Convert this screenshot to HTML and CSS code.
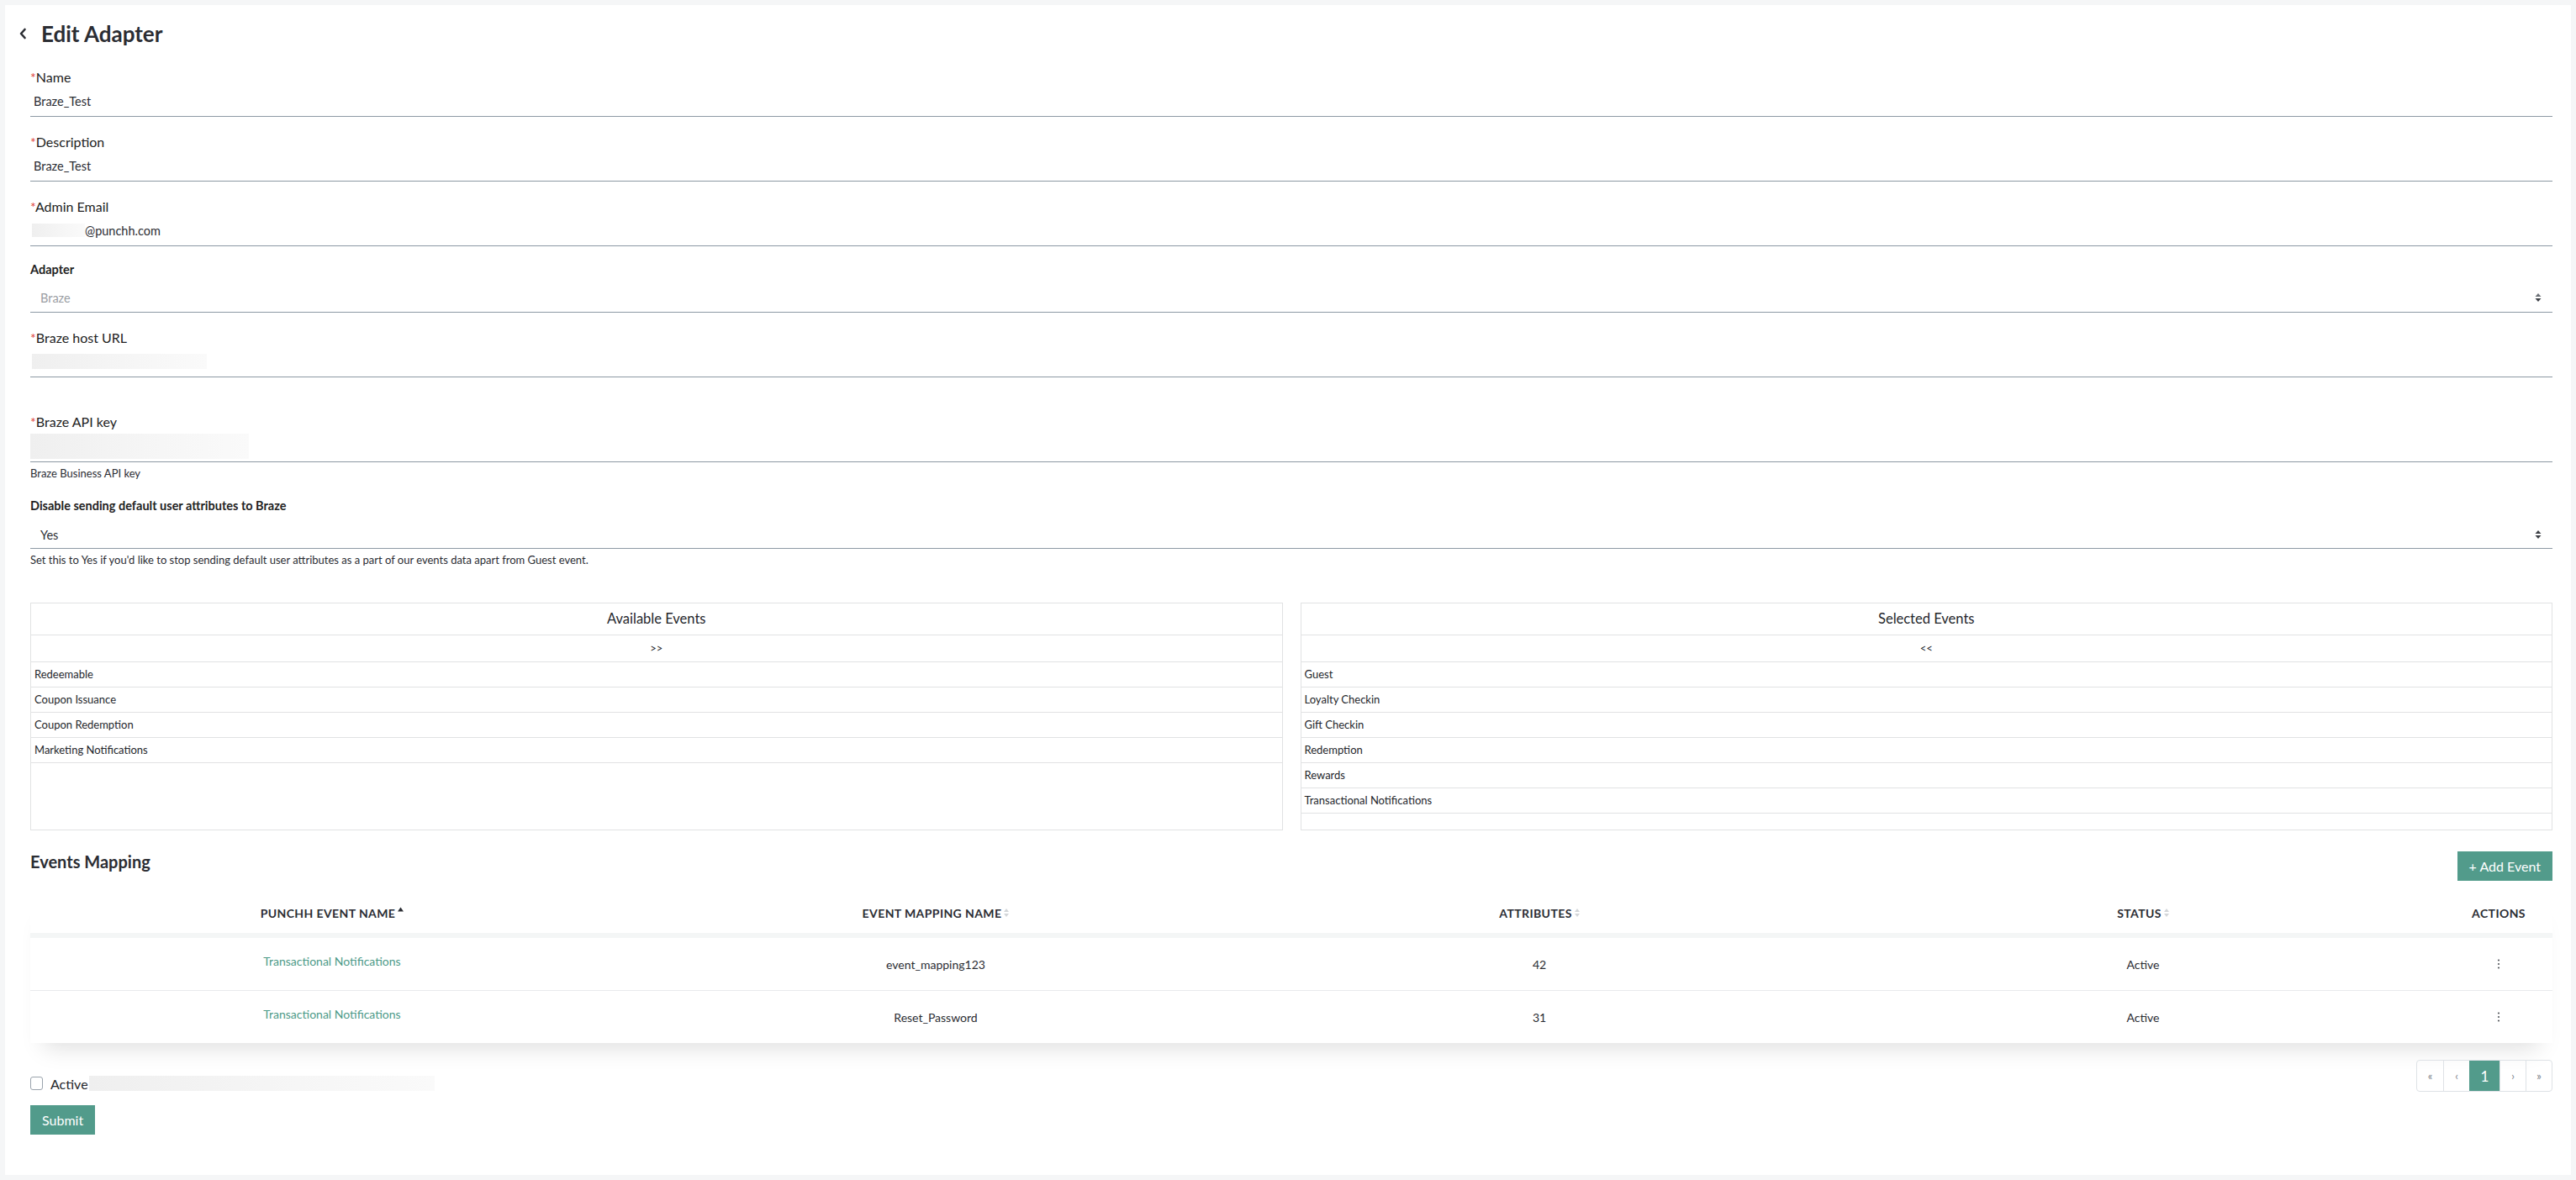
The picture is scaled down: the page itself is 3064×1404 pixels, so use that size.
FILE: index.html
```html
<!DOCTYPE html>
<html lang="en">
<head>
    <meta charset="UTF-8">
    <meta name="viewport" content="width=device-width, initial-scale=1.0">
    <title>Edit Adapter</title>
    <link rel="stylesheet" href="styles.css">
</head>
<body>

<div class="card">
    <!-- Page Header -->
    <div class="page-header">
        <a class="back" href="#">
            <svg width="10" height="14" viewBox="0 0 10 14"><path d="M7.5 2 L3 7 L7.5 12" fill="none" stroke="#2b2d33" stroke-width="2.6" stroke-linecap="round" stroke-linejoin="round"/></svg>
        </a>
        <h1>Edit Adapter</h1>
    </div>

    <form class="adapter-form">
        <div class="field">
            <label><span class="req">*</span>Name</label>
            <div class="line">Braze_Test</div>
        </div>

        <div class="field">
            <label><span class="req">*</span>Description</label>
            <div class="line">Braze_Test</div>
        </div>

        <div class="field">
            <label><span class="req">*</span>Admin Email</label>
            <div class="line tight"><span class="masked mask-email"></span>@punchh.com</div>
        </div>

        <div class="field field-select">
            <label class="small-label">Adapter</label>
            <div class="select muted">
                Braze
                <svg class="arrows" width="8" height="12" viewBox="0 0 8 12"><path d="M0.5 5 L4 1 L7.5 5 Z" fill="#6b6f75"/><path d="M0.5 7 L4 11 L7.5 7 Z" fill="#3d4046"/></svg>
            </div>
        </div>

        <div class="field">
            <label><span class="req">*</span>Braze host URL</label>
            <div class="line tight"><span class="masked mask-host"></span></div>
            <div class="help"></div>
        </div>

        <div class="field field-key">
            <label><span class="req">*</span>Braze API key</label>
            <div class="line line-key"><span class="masked mask-key"></span></div>
            <div class="help">Braze Business API key</div>
        </div>

        <div class="field field-select2">
            <label class="small-label">Disable sending default user attributes to Braze</label>
            <div class="select select-yes">
                Yes
                <svg class="arrows" width="8" height="12" viewBox="0 0 8 12"><path d="M0.5 5 L4 1 L7.5 5 Z" fill="#3d4046"/><path d="M0.5 7 L4 11 L7.5 7 Z" fill="#3d4046"/></svg>
            </div>
            <div class="help">Set this to Yes if you'd like to stop sending default user attributes as a part of our events data apart from Guest event.</div>
        </div>

        <!-- Event pickers -->
        <div class="events">
            <div class="event-box">
                <div class="box-title">Available Events</div>
                <div class="box-move">&gt;&gt;</div>
                <div class="box-item">Redeemable</div>
                <div class="box-item">Coupon Issuance</div>
                <div class="box-item">Coupon Redemption</div>
                <div class="box-item">Marketing Notifications</div>
            </div>
            <div class="event-box">
                <div class="box-title">Selected Events</div>
                <div class="box-move">&lt;&lt;</div>
                <div class="box-item">Guest</div>
                <div class="box-item">Loyalty Checkin</div>
                <div class="box-item">Gift Checkin</div>
                <div class="box-item">Redemption</div>
                <div class="box-item">Rewards</div>
                <div class="box-item">Transactional Notifications</div>
            </div>
        </div>

        <!-- Events Mapping -->
        <div class="section-head">
            <h2>Events Mapping</h2>
            <button type="button" class="btn">+ Add Event</button>
        </div>

        <div class="mapping-table">
            <div class="t-row t-head">
                <div>PUNCHH EVENT NAME<svg class="sort sort-up" width="7" height="6" viewBox="0 0 7 6"><path d="M0 5.5 L3.5 0.5 L7 5.5 Z" fill="#2b2d33"/></svg></div>
                <div>EVENT MAPPING NAME<svg class="sort" width="6" height="12" viewBox="0 0 6 12"><path d="M0 5 L3 1 L6 5 Z M0 7 L3 11 L6 7 Z" fill="#d3d6d9"/></svg></div>
                <div>ATTRIBUTES<svg class="sort" width="6" height="12" viewBox="0 0 6 12"><path d="M0 5 L3 1 L6 5 Z M0 7 L3 11 L6 7 Z" fill="#d3d6d9"/></svg></div>
                <div>STATUS<svg class="sort" width="6" height="12" viewBox="0 0 6 12"><path d="M0 5 L3 1 L6 5 Z M0 7 L3 11 L6 7 Z" fill="#d3d6d9"/></svg></div>
                <div>ACTIONS</div>
            </div>
            <div class="t-row">
                <div><a class="link" href="#">Transactional Notifications</a></div>
                <div>event_mapping123</div>
                <div>42</div>
                <div>Active</div>
                <div><svg width="4" height="12" viewBox="0 0 4 12"><circle cx="2" cy="1.5" r="1.1" fill="#55585d"/><circle cx="2" cy="6" r="1.1" fill="#55585d"/><circle cx="2" cy="10.5" r="1.1" fill="#55585d"/></svg></div>
            </div>
            <div class="t-row">
                <div><a class="link" href="#">Transactional Notifications</a></div>
                <div>Reset_Password</div>
                <div>31</div>
                <div>Active</div>
                <div><svg width="4" height="12" viewBox="0 0 4 12"><circle cx="2" cy="1.5" r="1.1" fill="#55585d"/><circle cx="2" cy="6" r="1.1" fill="#55585d"/><circle cx="2" cy="10.5" r="1.1" fill="#55585d"/></svg></div>
            </div>
        </div>

        <div class="form-foot">
            <label class="check">
                <span class="box"></span>
                Active
                <span class="masked mask-active"></span>
            </label>
            <div class="pager">
                <span>&laquo;</span>
                <span>&lsaquo;</span>
                <span class="current">1</span>
                <span>&rsaquo;</span>
                <span>&raquo;</span>
            </div>
        </div>

        <button type="button" class="btn submit">Submit</button>
    </form>
</div>

</body>
</html>
```

FILE: styles.css
```css
/* Base */
* {
    box-sizing: border-box;
}

body {
    margin: 0;
    background-color: #f5f6f7;
    font-family: Lato, "Open Sans", sans-serif;
    color: #24262b;
}

/* Card */
.card {
    margin: 6px 6px 0;
    background: #fff;
    padding: 12px 22px 48px 30px;
}

.page-header {
    display: flex;
    align-items: center;
    height: 44px;
    margin-left: -14px;
}

.back {
    width: 27px;
    display: flex;
    align-items: center;
}

h1 {
    margin: 0;
    font-size: 26px;
    font-weight: 700;
    color: #2b2d33;
}

/* Form fields */
.field {
    margin-top: 20px;
}

.field label {
    display: block;
    font-size: 16px;
    line-height: 20px;
    height: 20px;
    color: #222;
}

.field .small-label {
    font-size: 14.5px;
    font-weight: 700;
}

.req {
    color: #e0433a;
}

.line {
    height: 37px;
    border-bottom: 1px solid #8d99a4;
    display: flex;
    align-items: center;
    padding-left: 4px;
    font-size: 14.5px;
    color: #2b2d33;
}

.line.tight {
    padding-left: 2px;
}

.line-key {
    height: 38px;
    padding-left: 0;
}

.masked {
    display: inline-block;
    background: linear-gradient(90deg, #efefef, #f6f6f6 60%, #fafafa);
}

.mask-email {
    width: 63px;
    height: 16px;
}

.mask-host {
    width: 208px;
    height: 18px;
}

.mask-key {
    width: 260px;
    height: 30px;
}

.field-select {
    margin-top: 18px;
}

.select {
    height: 41px;
    padding: 6px 13px 0 12px;
    border-bottom: 1px solid #8d99a4;
    display: flex;
    align-items: center;
    justify-content: space-between;
    font-size: 14.5px;
}

.select.muted {
    color: #9a9ea3;
}

.select-yes {
    padding-top: 8px;
    color: #2b2d33;
}

.help {
    margin-top: 5px;
    height: 16px;
    line-height: 16px;
    font-size: 13px;
    color: #2b2d33;
}

.field-key {
    margin-top: 22px;
}

.field-select2 {
    margin-top: 21px;
}

/* Event pickers */
.events {
    display: grid;
    grid-template-columns: 1fr 1fr;
    gap: 21px;
    margin-top: 43px;
}

.event-box {
    border: 1px solid #e1e2e3;
    min-height: 271px;
}

.box-title {
    height: 38px;
    line-height: 37px;
    text-align: center;
    font-size: 16.5px;
    border-bottom: 1px solid #e1e2e3;
}

.box-move {
    height: 32px;
    line-height: 31px;
    text-align: center;
    font-size: 13px;
    border-bottom: 1px solid #e1e2e3;
}

.box-item {
    height: 30px;
    line-height: 29px;
    padding-left: 4px;
    font-size: 13px;
    border-bottom: 1px solid #e1e2e3;
}

/* Events Mapping */
.section-head {
    display: flex;
    justify-content: space-between;
    align-items: flex-start;
    margin-top: 25px;
}

h2 {
    margin: 0;
    font-size: 20px;
    line-height: 24px;
    font-weight: 700;
    color: #2b2d33;
}

.btn {
    height: 35px;
    padding: 0 14px;
    border: none;
    background-color: #529b8b;
    color: #fff;
    font-family: Lato, "Open Sans", sans-serif;
    font-size: 16px;
    cursor: pointer;
}

.mapping-table {
    margin-top: 14px;
    box-shadow: 0 22px 26px -16px rgba(0, 0, 0, 0.13);
}

.t-row {
    display: grid;
    grid-template-columns: repeat(4, 1fr) 128px;
    height: 63px;
    border-bottom: 1px solid #e8eaec;
    font-size: 14px;
    color: #2b2d33;
}

.t-row:last-child {
    height: 62px;
    border-bottom: none;
}

.t-row > div {
    display: flex;
    align-items: center;
    justify-content: center;
}

.t-head {
    height: 54px;
    border-bottom: 6px solid #f4f6f6;
    font-weight: 700;
    font-size: 14px;
    letter-spacing: 0.4px;
}

.sort {
    margin-left: 3px;
}

.sort-up {
    margin-top: -8px;
}

.link {
    color: #4c9a88;
    text-decoration: none;
    margin-top: -8px;
}

/* Footer */
.form-foot {
    display: flex;
    justify-content: space-between;
    align-items: flex-end;
    margin-top: 20px;
}

.check {
    display: flex;
    align-items: center;
    height: 20px;
    font-size: 16px;
}

.check .box {
    width: 15px;
    height: 16px;
    border: 1px solid #9aa3ac;
    border-radius: 3px;
    margin-right: 9px;
}

.mask-active {
    width: 411px;
    height: 18px;
    margin-left: 1px;
}

.pager {
    display: flex;
    height: 38px;
    border: 1px solid #dee2e6;
    border-radius: 4px;
    overflow: hidden;
}

.pager span {
    display: flex;
    align-items: center;
    justify-content: center;
    width: 31px;
    font-size: 13px;
    color: #80858a;
    border-left: 1px solid #dee2e6;
}

.pager span:first-child {
    border-left: none;
}

.pager .current {
    width: 36px;
    background-color: #529b8b;
    border-left-color: #529b8b;
    color: #fff;
    font-size: 17px;
}

.submit {
    display: block;
    margin-top: 16px;
    padding: 0 14px;
}
```
